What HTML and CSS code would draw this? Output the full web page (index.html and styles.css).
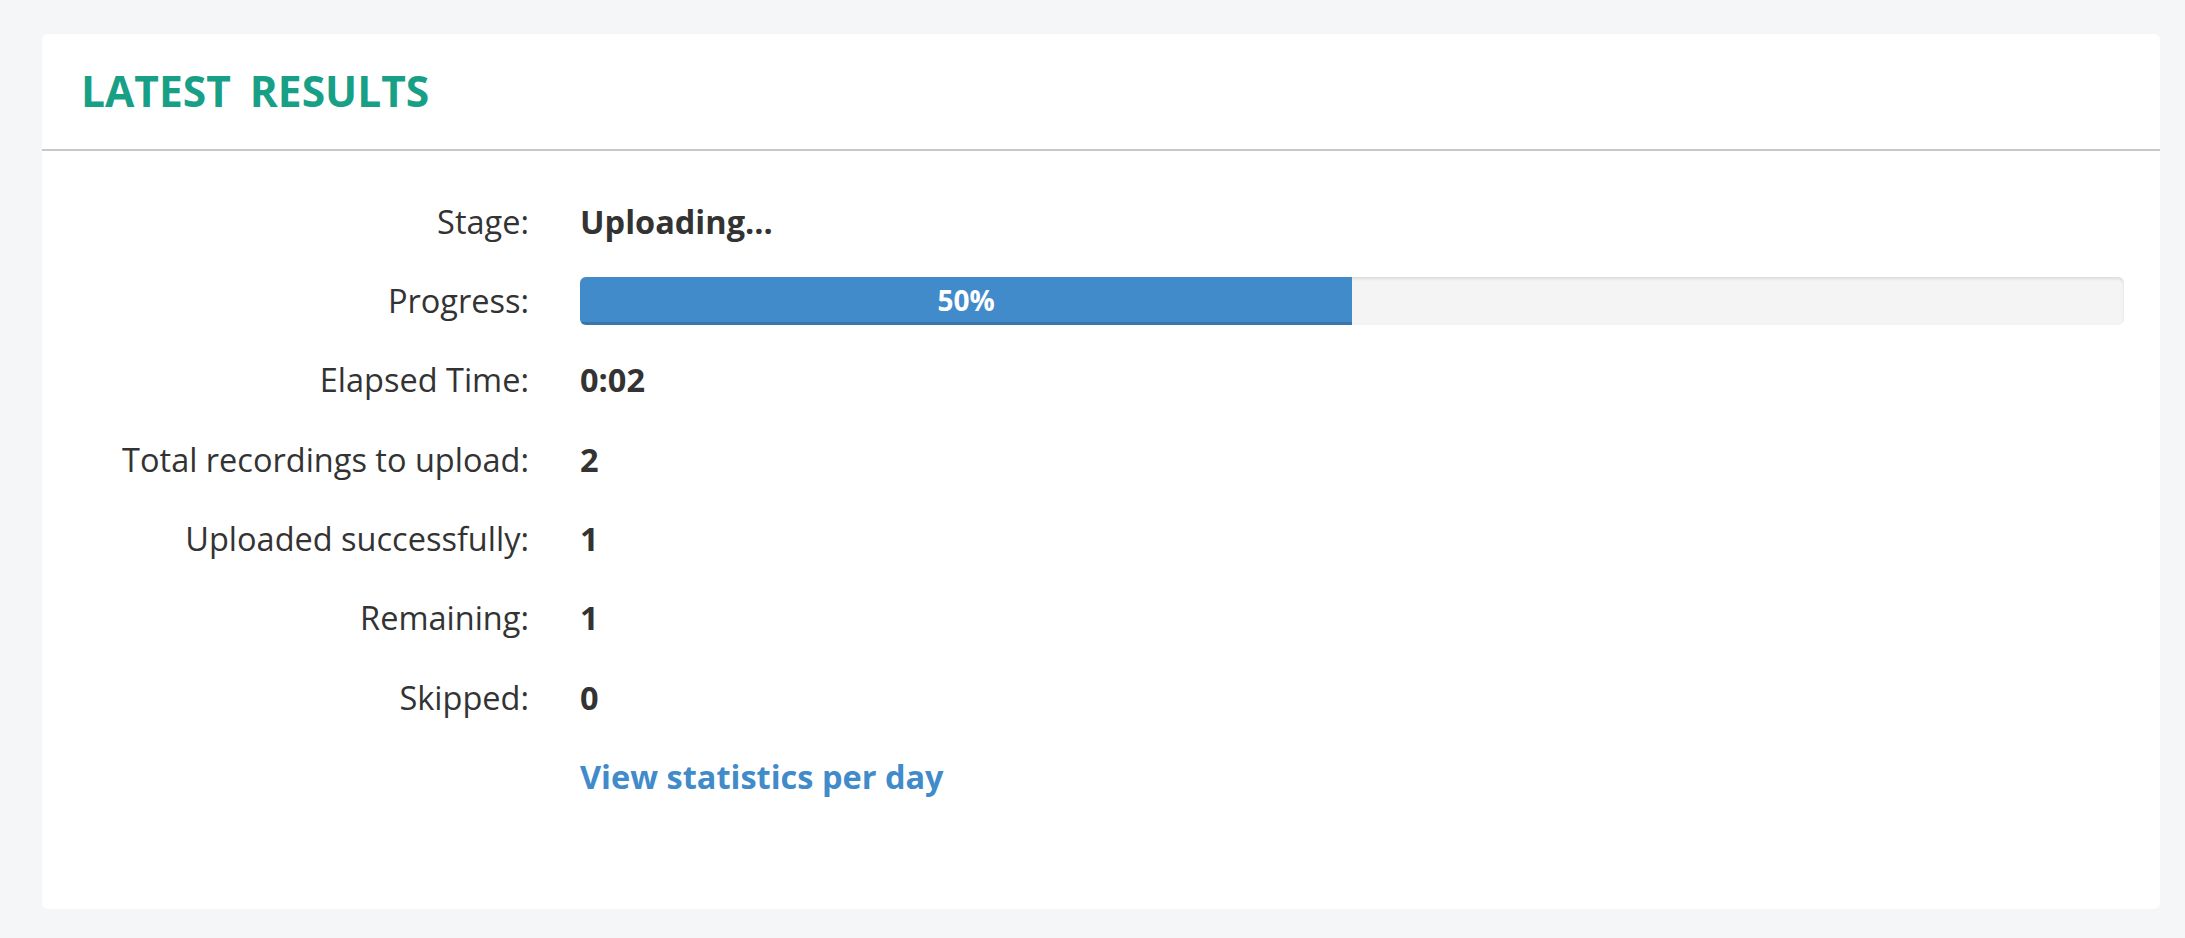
FILE: index.html
```html
<!DOCTYPE html>
<html lang="en">
<head>
<meta charset="utf-8">
<title>Latest Results</title>
<link rel="stylesheet" href="styles.css">
</head>
<body>
<section class="card">
  <header class="card-header">
    <h2 class="card-title">LATEST RESULTS</h2>
  </header>
  <div class="card-body">
    <div class="stats">
      <div class="stat-row"><div class="stat-label">Stage:</div><div class="stat-value">Uploading...</div></div>
      <div class="stat-row">
        <div class="stat-label">Progress:</div>
        <div class="stat-value">
          <div class="progress"><div class="progress-bar" style="width: 50%">50%</div></div>
        </div>
      </div>
      <div class="stat-row"><div class="stat-label">Elapsed Time:</div><div class="stat-value">0:02</div></div>
      <div class="stat-row"><div class="stat-label">Total recordings to upload:</div><div class="stat-value">2</div></div>
      <div class="stat-row"><div class="stat-label">Uploaded successfully:</div><div class="stat-value">1</div></div>
      <div class="stat-row"><div class="stat-label">Remaining:</div><div class="stat-value">1</div></div>
      <div class="stat-row"><div class="stat-label">Skipped:</div><div class="stat-value">0</div></div>
      <div class="stat-row"><div class="stat-label"></div><div class="stat-value"><a class="stat-link" href="#">View statistics per day</a></div></div>
    </div>
  </div>
</section>
</body>
</html>
```

FILE: styles.css
```css
html, body {
  margin: 0;
  padding: 0;
}

body {
  background: #f5f6f8;
  font-family: "Open Sans", "Liberation Sans", sans-serif;
  color: #333333;
  padding: 34px 25px 32px 42px;
}

.card {
  background: #ffffff;
  border-radius: 6px;
  overflow: hidden;
}

.card-header {
  padding: 27px 39px 28px 39px;
  border-bottom: 2px solid #c6c9cc;
}

.card-title {
  margin: 0;
  font-size: 42.5px;
  line-height: 60px;
  font-weight: 700;
  color: #17a085;
  word-spacing: 8px;
}

.card-body {
  padding: 31px 36px 92px 0;
}

.stats {
  display: flex;
  flex-direction: column;
}

.stat-row {
  display: grid;
  grid-template-columns: 487px 1fr;
  column-gap: 51px;
  align-items: center;
  height: 79.33px;
  font-size: 32.5px;
  line-height: 44px;
}

.stat-label {
  text-align: right;
  font-weight: 400;
  color: #333333;
}

.stat-value {
  font-weight: 700;
  color: #333333;
}

.progress {
  height: 48px;
  background: #f4f4f4;
  border-radius: 6px;
  overflow: hidden;
  box-shadow: inset 0 2px 3px rgba(0, 0, 0, 0.1);
  display: flex;
}

.progress-bar {
  background: #428bca;
  color: #ffffff;
  font-size: 28px;
  font-weight: 700;
  line-height: 46px;
  text-align: center;
  box-shadow: inset 0 -3px 0 rgba(0, 0, 0, 0.15);
}

.stat-link {
  color: #428bca;
  text-decoration: none;
  font-weight: 700;
}
```
